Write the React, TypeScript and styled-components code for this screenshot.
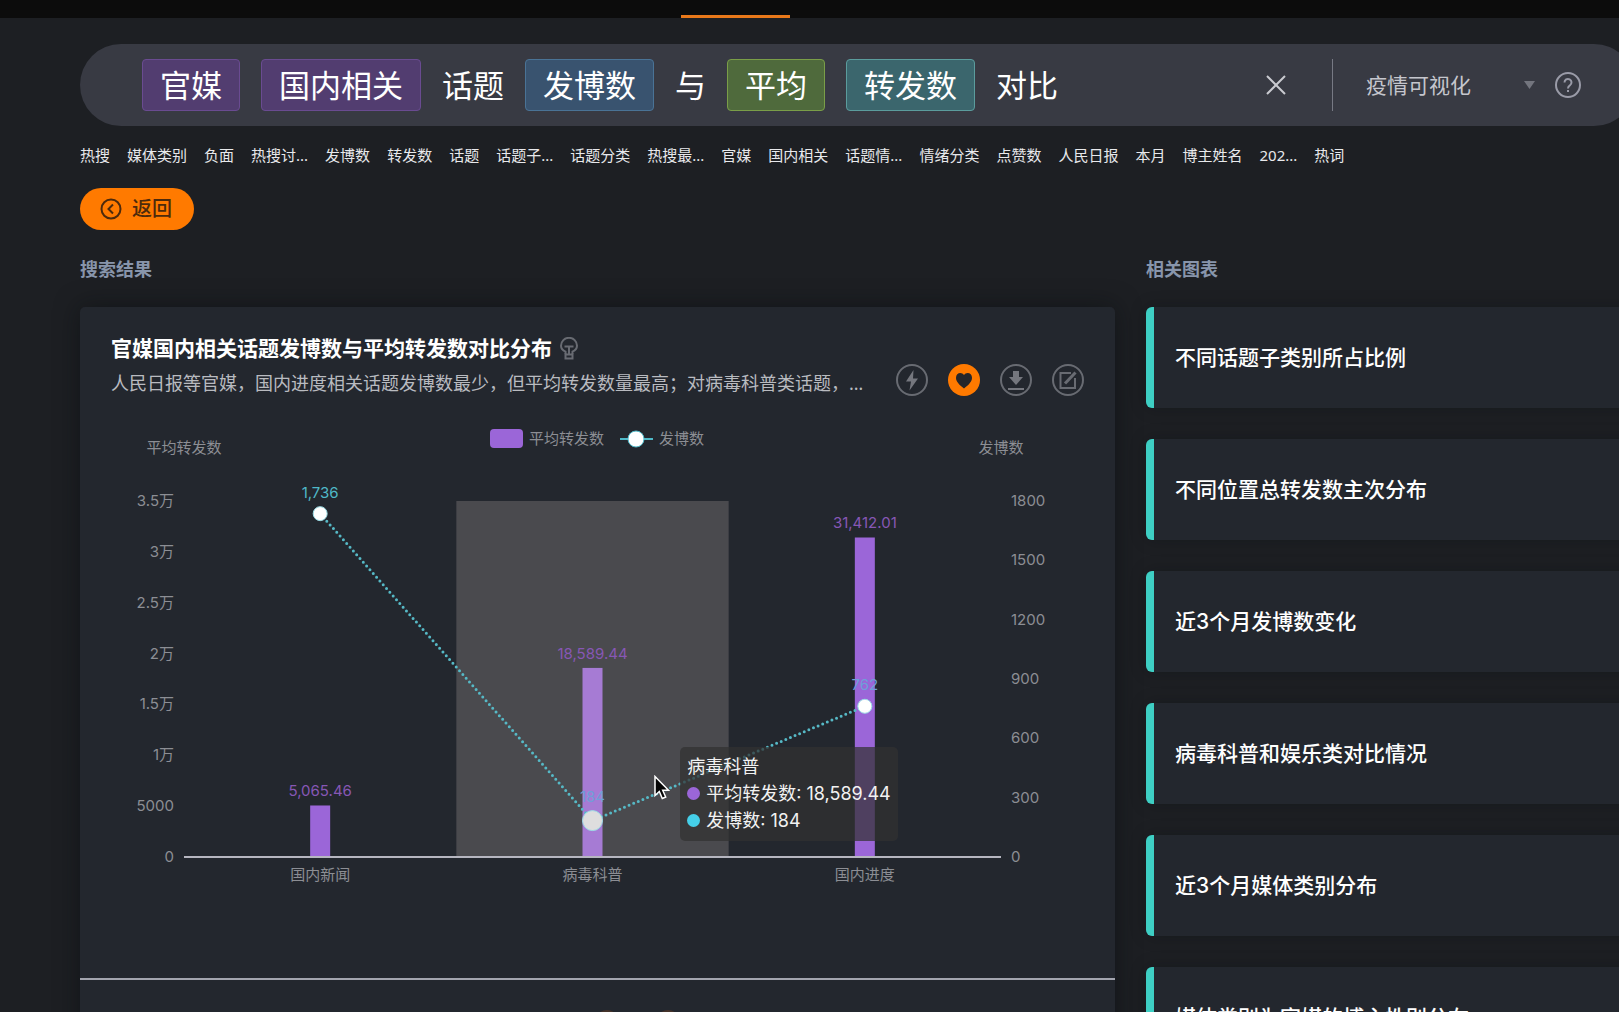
import React from 'react';
import styled, { createGlobalStyle } from 'styled-components';

const uiFont = '"Noto Sans", "Noto Sans CJK SC", sans-serif';
const chartFont = 'Inter, "Noto Sans CJK SC", sans-serif';

const color = {
  page: '#1d1f23',
  card: '#23272e',
  orange: '#ff7a00',
  teal: '#3ecfc4',
  purple: '#9b66d8',
  purpleHover: '#a67bd4',
  cyan: '#4fb9c8',
  axisText: '#8c8e94',
  line: '#a3a5af',
};

const GlobalStyle = createGlobalStyle`
  * { box-sizing: border-box; }
  body {
    margin: 0;
    background: ${color.page};
    color: #fff;
    font-family: ${uiFont};
  }
  button, select { font: inherit; color: inherit; }
  button { padding: 0; border: 0; background: none; cursor: pointer; }
`;

const Screen = styled.div`
  height: 100vh;
  overflow: hidden;
`;

const TopBar = styled.nav`
  display: flex;
  height: 18px;
  padding-left: 681px;
  background: #0c0c0c;
`;

const ActiveTab = styled.a`
  width: 109px;
  height: 18px;
  border-bottom: 3px solid #e8781a;
`;

const Content = styled.main`
  margin: 26px -16px 0 80px;
`;

const SearchBar = styled.form`
  display: flex;
  align-items: center;
  height: 82px;
  padding: 0 54px 0 62px;
  border-radius: 41px;
  background: #383a43;
`;

const Query = styled.div`
  display: flex;
  flex: 1;
  align-items: center;
  gap: 21px;
  font-size: 31px;
  line-height: 50px;
  white-space: nowrap;
`;

const tones = {
  purple: ['#523d70', '#6a4b91'],
  blue: ['#39536f', '#4a7396'],
  green: ['#4f6a3c', '#7a9e48'],
  teal: ['#3b666d', '#5b9c9d'],
};

const Token = styled.span<{ $tone: keyof typeof tones }>`
  padding: 0 17px;
  border: 1px solid ${(p) => tones[p.$tone][1]};
  border-radius: 4px;
  background: ${(p) => tones[p.$tone][0]};
`;

const ClearButton = styled.button`
  display: flex;
  width: 20px;
  height: 20px;
  margin-right: 46px;
`;

const Source = styled.div`
  display: flex;
  align-items: center;
  width: 203px;
  height: 52px;
  padding-left: 33px;
  border-left: 1px solid #777984;
`;

const SourceSelect = styled.select`
  flex: 1;
  min-width: 0;
  padding: 0;
  border: 0;
  outline: 0;
  appearance: none;
  background: none;
  color: #c5c6cd;
  font-size: 21px;
  line-height: 30px;
`;

const HelpButton = styled.button`
  display: flex;
  margin-left: 20px;
`;

const Suggestions = styled.div`
  display: flex;
  gap: 17px;
  margin-top: 17px;
  font-size: 15px;
  line-height: 24px;
`;

const Suggestion = styled.button`
  flex: none;
  color: #e8e9ec;
  white-space: nowrap;
`;

const BackButton = styled.button`
  display: flex;
  align-items: center;
  gap: 10px;
  height: 42px;
  margin-top: 21px;
  padding: 0 22px 0 20px;
  border-radius: 21px;
  background: ${color.orange};
  color: #4d2a0c;
  font-size: 20px;
  line-height: 30px;
  font-weight: 500;
`;

const Columns = styled.div`
  display: grid;
  grid-template-columns: minmax(0, 1035fr) minmax(0, 489fr);
  column-gap: 31px;
  margin-top: 25px;
`;

const SectionTitle = styled.h2`
  margin: 0 0 24px;
  color: #8895ab;
  font-size: 18px;
  line-height: 28px;
  font-weight: 700;
`;

const ResultCard = styled.section`
  min-height: 720px;
  border-radius: 5px;
  background: ${color.card};
  box-shadow: 0 0 24px rgba(8, 12, 14, 0.5);
`;

const CardHead = styled.header`
  display: flex;
  gap: 26px;
  padding: 25px 31px 0;
`;

const HeadText = styled.div`
  flex: 1;
  min-width: 0;
`;

const TitleRow = styled.div`
  display: flex;
  align-items: center;
  gap: 8px;
`;

const CardTitle = styled.h3`
  margin: 0;
  font-size: 21px;
  line-height: 32px;
  font-weight: 700;
`;

const Summary = styled.p`
  margin: 5px 0 0;
  overflow: hidden;
  color: #b9bbc0;
  font-size: 18px;
  line-height: 28px;
  text-overflow: ellipsis;
  white-space: nowrap;
`;

const Actions = styled.div`
  display: flex;
  gap: 20px;
  padding-top: 32px;
`;

const ActionButton = styled.button`
  display: flex;
  width: 32px;
  height: 32px;
`;

const ChartArea = styled.figure`
  position: relative;
  margin: 17px 0 0;
`;

const ChartSvg = styled.svg`
  display: block;
  width: 100%;
  font-family: ${chartFont};
  font-size: 15px;
`;

const Tooltip = styled.div`
  position: absolute;
  top: 333px;
  left: 58%;
  padding: 6px 7px 7px;
  border-radius: 5px;
  background: rgba(50, 50, 50, 0.72);
  color: #f2f2f2;
  font-family: ${chartFont};
  font-size: 18px;
  line-height: 27px;
  white-space: nowrap;
`;

const TooltipRow = styled.div`
  display: flex;
  align-items: center;
  gap: 6px;
`;

const Dot = styled.i<{ $fill: string }>`
  width: 13px;
  height: 13px;
  border-radius: 50%;
  background: ${(p) => p.$fill};
`;

const Pointer = styled.svg`
  position: absolute;
  top: 28px;
  left: -26px;
`;

const CardFoot = styled.footer`
  display: flex;
  justify-content: center;
  gap: 37px;
  margin-top: 88px;
  padding: 30px 0 30px 80px;
  border-top: 2px solid ${color.line};
`;

const Ring = styled.span`
  width: 24px;
  height: 24px;
  border: 2px solid #45332a;
  border-radius: 50%;
`;

const RelatedList = styled.ul`
  display: grid;
  gap: 31px;
  margin: 0;
  padding: 0;
  list-style: none;
`;

const RelatedCard = styled.button`
  display: block;
  width: 100%;
  height: 101px;
  padding-left: 21px;
  border-left: 8px solid ${color.teal};
  border-radius: 6px;
  background: ${color.card};
  box-shadow: 0 0 16px rgba(8, 12, 14, 0.25);
  font-size: 21px;
  line-height: 32px;
  font-weight: 500;
  font-family: ${chartFont};
  text-align: left;
`;

const query: { text: string; tone?: keyof typeof tones }[] = [
  { text: '官媒', tone: 'purple' },
  { text: '国内相关', tone: 'purple' },
  { text: '话题' },
  { text: '发博数', tone: 'blue' },
  { text: '与' },
  { text: '平均', tone: 'green' },
  { text: '转发数', tone: 'teal' },
  { text: '对比' },
];

const suggestions = [
  '热搜', '媒体类别', '负面', '热搜讨...', '发博数', '转发数', '话题', '话题子...', '话题分类', '热搜最...',
  '官媒', '国内相关', '话题情...', '情绪分类', '点赞数', '人民日报', '本月', '博主姓名', '202...', '热词',
];

const related = [
  '不同话题子类别所占比例',
  '不同位置总转发数主次分布',
  '近3个月发博数变化',
  '病毒科普和娱乐类对比情况',
  '近3个月媒体类别分布',
  '媒体类别为官媒的博主性别分布',
];

const data = [
  { name: '国内新闻', reposts: 5065.46, posts: 1736 },
  { name: '病毒科普', reposts: 18589.44, posts: 184 },
  { name: '国内进度', reposts: 31412.01, posts: 762 },
];
const hovered = 1;

const plot = { left: 104, right: 921, top: 87, bottom: 443 };
const plotHeight = plot.bottom - plot.top;
const band = (plot.right - plot.left) / data.length;
const centerOf = (i: number) => plot.left + band * (i + 0.5);
const repostY = (v: number) => plot.bottom - (v / 35000) * plotHeight;
const postY = (v: number) => plot.bottom - (v / 1800) * plotHeight;
const leftTicks = ['0', '5000', '1万', '1.5万', '2万', '2.5万', '3万', '3.5万'];
const rightTicks = [0, 300, 600, 900, 1200, 1500, 1800];

function Chart() {
  return (
    <ChartSvg viewBox="0 0 1035 476" role="img" aria-label="官媒国内相关话题发博数与平均转发数对比分布">
      <rect x={plot.left + band * hovered} y={plot.top} width={band} height={plotHeight} fill="#4a4a4e" />
      <rect x="410" y="15" width="33" height="19" rx="4" fill={color.purple} />
      <path d="M540 25h33" stroke={color.cyan} strokeWidth="2" />
      <circle cx="556" cy="25" r="8" fill="#fff" stroke={color.cyan} />
      <g fill={color.axisText}>
        <text x="449" y="30">平均转发数</text>
        <text x="579" y="30">发博数</text>
        <text x={plot.left} y="39" textAnchor="middle">平均转发数</text>
        <text x={plot.right} y="39" textAnchor="middle">发博数</text>
        {leftTicks.map((t, i) => (
          <text key={t} x="94" y={plot.bottom - (plotHeight * i) / 7 + 5} textAnchor="end">{t}</text>
        ))}
        {rightTicks.map((t, i) => (
          <text key={t} x="931" y={plot.bottom - (plotHeight * i) / 6 + 5}>{t}</text>
        ))}
        {data.map((d, i) => (
          <text key={d.name} x={centerOf(i)} y="466" textAnchor="middle">{d.name}</text>
        ))}
      </g>
      {data.map((d, i) => (
        <g key={d.name}>
          <rect
            x={centerOf(i) - 10}
            y={repostY(d.reposts)}
            width="20"
            height={plot.bottom - repostY(d.reposts)}
            fill={i === hovered ? color.purpleHover : color.purple}
          />
          <text x={centerOf(i)} y={repostY(d.reposts) - 9} textAnchor="middle" fill="#8757b5">
            {d.reposts.toLocaleString('en-US')}
          </text>
        </g>
      ))}
      <path d={`M${plot.left} ${plot.bottom}H${plot.right}`} stroke="#b6b6c0" strokeWidth="2" />
      <polyline
        points={data.map((d, i) => `${centerOf(i)},${postY(d.posts)}`).join(' ')}
        fill="none"
        stroke="#56b9c6"
        strokeWidth="3"
        strokeLinecap="round"
        strokeDasharray="0 5"
      />
      {data.map((d, i) => (
        <g key={d.name}>
          <circle
            cx={centerOf(i)}
            cy={postY(d.posts)}
            r={i === hovered ? 10 : 7}
            fill={i === hovered ? '#dedede' : '#fff'}
            stroke="#9bdde6"
          />
          <text x={centerOf(i)} y={postY(d.posts) - (i === hovered ? 19 : 16)} textAnchor="middle" fill={i === 0 ? color.cyan : '#6f9fd8'}>
            {d.posts.toLocaleString('en-US')}
          </text>
        </g>
      ))}
    </ChartSvg>
  );
}

const strokeProps = { fill: 'none', stroke: '#686b72', strokeWidth: 2 };

export default function App() {
  return (
    <Screen>
      <GlobalStyle />
      <TopBar>
        <ActiveTab href="#search" aria-label="搜索" />
      </TopBar>
      <Content>
        <SearchBar onSubmit={(e) => e.preventDefault()}>
          <Query>
            {query.map((q) =>
              q.tone ? <Token key={q.text} $tone={q.tone}>{q.text}</Token> : <span key={q.text}>{q.text}</span>,
            )}
          </Query>
          <ClearButton type="button" aria-label="清除">
            <svg width="20" height="20" viewBox="0 0 20 20"><path d="M1 1l18 18M19 1L1 19" stroke="#c9cad0" strokeWidth="2" /></svg>
          </ClearButton>
          <Source>
            <SourceSelect aria-label="数据源" defaultValue="epidemic">
              <option value="epidemic">疫情可视化</option>
            </SourceSelect>
            <svg width="11" height="8" viewBox="0 0 11 8"><path d="M0 0h11L5.500 8z" fill="#73757e" /></svg>
          </Source>
          <HelpButton type="button" aria-label="帮助">
            <svg width="26" height="26" viewBox="0 0 26 26" fill="none" stroke="#9a9ba8" strokeWidth="2">
              <circle cx="13" cy="13" r="12" />
              <path d="M9.500 10.500a3.500 3.500 0 1 1 5.500 2.800c-1.300.9-2 1.500-2 3.200M13 18v2" />
            </svg>
          </HelpButton>
        </SearchBar>

        <Suggestions>
          {suggestions.map((s) => <Suggestion key={s} type="button">{s}</Suggestion>)}
        </Suggestions>

        <BackButton type="button">
          <svg width="22" height="22" viewBox="0 0 22 22" fill="none" stroke="currentColor" strokeWidth="2">
            <circle cx="11" cy="11" r="9.500" />
            <path d="M13 6.500L8.500 11l4.500 4.500" />
          </svg>
          返回
        </BackButton>

        <Columns>
          <div>
            <SectionTitle>搜索结果</SectionTitle>
            <ResultCard>
              <CardHead>
                <HeadText>
                  <TitleRow>
                    <CardTitle>官媒国内相关话题发博数与平均转发数对比分布</CardTitle>
                    <svg width="18" height="23" viewBox="0 0 18 23" {...strokeProps}>
                      <path d="M5.500 16.500v-1.800C3 13.500 1 11.500 1 8.800a8 8 0 0 1 16 0c0 2.700-2 4.700-4.500 5.900v1.800" />
                      <path d="M5.500 16v5.500h7V16M4.500 9.500h9M9 9.500V18M6 17.500h6" />
                    </svg>
                  </TitleRow>
                  <Summary>
                    人民日报等官媒，国内进度相关话题发博数最少，但平均转发数量最高；对病毒科普类话题，…
                  </Summary>
                </HeadText>
                <Actions>
                  <ActionButton type="button" aria-label="快速分析">
                    <svg width="32" height="32" viewBox="0 0 32 32">
                      <circle cx="16" cy="16" r="15" {...strokeProps} />
                      <path d="M17.500 6L10 17.500h5L13.500 26.500 22 14.500h-5z" fill="#75777e" />
                    </svg>
                  </ActionButton>
                  <ActionButton type="button" aria-label="收藏">
                    <svg width="32" height="32" viewBox="0 0 32 32">
                      <circle cx="16" cy="16" r="16" fill={color.orange} />
                      <path d="M16 24.500C11 20.500 8 17.500 8 13.700 8 11 10 9 12.300 9c1.500 0 2.900.8 3.700 2 .8-1.200 2.200-2 3.700-2C22 9 24 11 24 13.700c0 3.800-3 6.800-8 10.800z" fill="#26262a" />
                    </svg>
                  </ActionButton>
                  <ActionButton type="button" aria-label="下载">
                    <svg width="32" height="32" viewBox="0 0 32 32">
                      <circle cx="16" cy="16" r="15" {...strokeProps} />
                      <path d="M13 7h6v6h4l-7 8-7-8h4zM8 24h16v2H8z" fill="#75777e" />
                    </svg>
                  </ActionButton>
                  <ActionButton type="button" aria-label="编辑">
                    <svg width="32" height="32" viewBox="0 0 32 32" {...strokeProps}>
                      <circle cx="16" cy="16" r="15" />
                      <path d="M19 9H8.500v15H23V14" />
                      <path d="M13 19.500L23.500 8.500" strokeWidth="3" />
                    </svg>
                  </ActionButton>
                </Actions>
              </CardHead>
              <ChartArea>
                <Chart />
                <Tooltip>
                  <div>病毒科普</div>
                  <TooltipRow><Dot $fill={color.purple} />平均转发数: 18,589.44</TooltipRow>
                  <TooltipRow><Dot $fill="#45cfe8" />发博数: 184</TooltipRow>
                  <Pointer width="16" height="25" viewBox="0 0 16 25">
                    <path d="M1 1.500v19l4.300-4 3 7 3.400-1.500-3-6.800h5.800z" fill="#050505" stroke="#fff" strokeWidth="1.500" />
                  </Pointer>
                </Tooltip>
              </ChartArea>
              <CardFoot><Ring /><Ring /></CardFoot>
            </ResultCard>
          </div>
          <div>
            <SectionTitle>相关图表</SectionTitle>
            <RelatedList>
              {related.map((r) => <li key={r}><RelatedCard type="button">{r}</RelatedCard></li>)}
            </RelatedList>
          </div>
        </Columns>
      </Content>
    </Screen>
  );
}
